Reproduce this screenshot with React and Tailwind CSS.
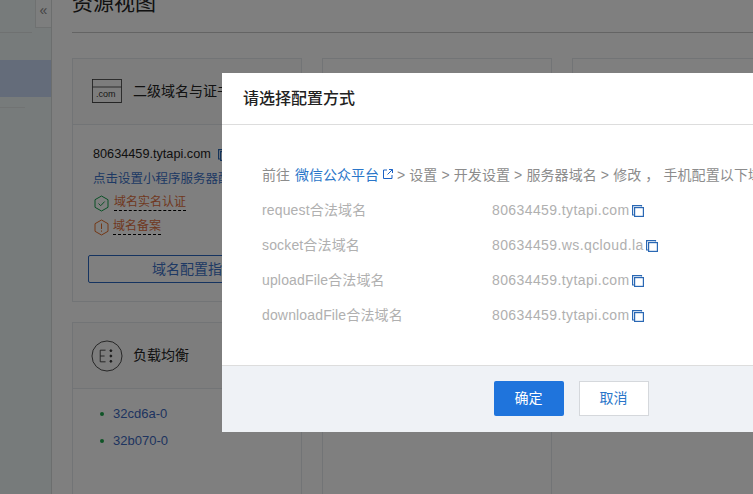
import React from 'react';

const font = { cjk: 'font-["Liberation_Sans","Noto_Sans_CJK_SC",sans-serif]' };

function CopyIcon({ className = '' }) {
  return (
    <svg className={className} width="12" height="12" viewBox="0 0 12 12" fill="none" stroke="#2a68b4" strokeWidth="1.2">
      <path d="M9.5 1.5V.6H.6v9.4h1.4" />
      <rect x="2.6" y="2.6" width="8.8" height="8.8" />
    </svg>
  );
}

function Card({ icon, title, className = '', children }) {
  return (
    <div className={`border border-[#e5e8ec] bg-white ${className}`}>
      <div className="h-[66px] border-b border-[#e5e8ec] flex items-center gap-[10px] pl-[19px] bg-[#fbfbfb]">
        {icon}
        <span className="text-[14px] text-[#222] whitespace-nowrap">{title}</span>
      </div>
      {children}
    </div>
  );
}

const rows = [
  ['request合法域名', '80634459.tytapi.com'],
  ['socket合法域名', '80634459.ws.qcloud.la'],
  ['uploadFile合法域名', '80634459.tytapi.com'],
  ['downloadFile合法域名', '80634459.tytapi.com'],
];

export default function App() {
  return (
    <div className={`relative flex h-screen w-full overflow-hidden bg-white ${font.cjk}`}>
      {/* sidebar */}
      <div className="w-[52px] shrink-0 bg-[#eef6f6] border-r border-[#d8dcdc] flex flex-col">
        <div className="h-[28px] flex justify-end">
          <div className="w-[16px] bg-[#fbfdfd] border-l border-b border-[#dfe3e3] flex items-start justify-center text-[14px] leading-[20px] text-[#888]">«</div>
        </div>
        <div className="mt-[4px] h-px w-[32px] bg-[#dfe3e3]"></div>
        <div className="mt-[27px] h-[37px] bg-[#c9d9f4]"></div>
        <div className="mt-[10px] h-px w-[25px] bg-[#e2e6e6]"></div>
      </div>

      {/* main */}
      <div className="flex-1 pl-[20px] min-w-0">
        <div className="h-[33px] flex border-b border-[#c8c8c8]">
          <div className="-mt-[10px] text-[21px] leading-[26px] text-[#222] whitespace-nowrap">资源视图</div>
        </div>
        <div className="mt-[25px] flex gap-[20px]">
          <div className="w-[230px] shrink-0 flex flex-col gap-[20px]">
            <Card
              className="h-[244px]"
              title="二级域名与证书"
              icon={
                <svg width="31" height="25" viewBox="0 0 31 25" fill="none" stroke="#333" strokeWidth="0.8" className="shrink-0">
                  <rect x="0.5" y="0.5" width="29" height="23" />
                  <path d="M.5 8h29" />
                  <path d="M.5 23.5h30" strokeDasharray="1 1" />
                  <text x="4" y="18" fontSize="9" fill="#333" stroke="none" fontFamily="Liberation Sans">.com</text>
                </svg>
              }
            >
              <div className="pt-[18px] pl-[15px] flex flex-col">
                <div className="ml-[5px] h-[24px] flex items-center gap-[7px] text-[12.7px] text-[#222] whitespace-nowrap">
                  80634459.tytapi.com
                  <CopyIcon />
                </div>
                <div className="ml-[5px] h-[24px] flex items-center text-[12.5px] text-[#3d72c8] whitespace-nowrap">点击设置小程序服务器配置</div>
                <div className="ml-[5px] h-[24px] flex items-center gap-[4px]">
                  <svg width="17" height="17" viewBox="0 0 17 17" fill="none" stroke="#12a04a" strokeWidth="1" className="shrink-0">
                    <path d="M8.5 1l6.5 3.7v7.6L8.5 16 2 12.3V4.7z" />
                    <path d="M5.5 8.5l2.2 2.2 4-4.2" />
                  </svg>
                  <span className="text-[12px] leading-[15px] text-[#e0703f] border-b border-dashed border-black">域名实名认证</span>
                </div>
                <div className="ml-[5px] h-[24px] flex items-center gap-[3px]">
                  <svg width="17" height="17" viewBox="0 0 17 17" fill="none" stroke="#e8702a" strokeWidth="1" className="shrink-0">
                    <path d="M8.5 1l6.5 3.7v7.6L8.5 16 2 12.3V4.7z" />
                    <path d="M8.5 4.5v5.5M8.5 11.5v1.2" />
                  </svg>
                  <span className="text-[12px] leading-[15px] text-[#e0703f] border-b border-dashed border-black">域名备案</span>
                </div>
                <div className="mt-[16px] h-[28px] w-[212px] border border-[#2a66c0] rounded-[2px] flex items-center justify-center text-[14px] text-[#3d72c8]">域名配置指引</div>
              </div>
            </Card>
            <Card
              className="h-[300px]"
              title="负载均衡"
              icon={
                <svg width="32" height="32" viewBox="0 0 33 33" fill="none" stroke="#333" strokeWidth="0.9" className="shrink-0 -ml-px">
                  <circle cx="16.5" cy="16.5" r="15.5" />
                  <path d="M15 10.5h-5.5v12H15M9.5 16.5H14" />
                  <circle cx="20.5" cy="11" r="1" fill="#333" />
                  <circle cx="20.5" cy="16.5" r="1" fill="#333" />
                  <circle cx="20.5" cy="22" r="1" fill="#333" />
                </svg>
              }
            >
              <div className="pt-[11px] pl-[27px] flex flex-col">
                {['32cd6a-0', '32b070-0'].map((name) => (
                  <div key={name} className="h-[27px] flex items-center gap-[9px] text-[13px] text-[#3d68c0]">
                    <span className="w-[4px] h-[4px] bg-[#1fa84f] rounded-full"></span>
                    {name}
                  </div>
                ))}
              </div>
            </Card>
          </div>
          <div className="w-[230px] shrink-0 flex flex-col gap-[20px]">
            <div className="h-[244px] border border-[#e5e8ec]"></div>
            <div className="h-[300px] border border-[#e5e8ec]"></div>
          </div>
          <div className="w-[230px] shrink-0">
            <div className="h-[244px] border border-[#e5e8ec]"></div>
          </div>
        </div>
      </div>

      {/* mask */}
      <div className="absolute inset-0 bg-black/50"></div>

      {/* dialog */}
      <div className="absolute left-[222px] top-[73px] w-[698px] bg-white">
        <div className="h-[52px] border-b border-[#dddddd] flex items-center pl-[21px] text-[16px] font-medium text-[#222]">请选择配置方式</div>
        <div className="h-[240px] pl-[40px] pt-[40px]">
          <div className="h-[20px] flex items-center text-[14px] text-[#8c8c8c] whitespace-nowrap">
            前往<span className="ml-[5px] text-[#2a76c9]">微信公众平台</span>
            <svg width="10" height="10" viewBox="0 0 10 10" fill="none" stroke="#1c62c4" strokeWidth="1" className="ml-[4px] mb-[3px]">
              <path d="M4 1H.5v8.5H9V6" />
              <path d="M6 .5h3.5V4M9.5.5L4.5 5.5" />
            </svg>
            <span className="ml-[4px] tracking-[0.1px]">&gt; 设置 &gt; 开发设置 &gt; 服务器域名 &gt; 修改 ， 手机配置以下域名</span>
          </div>
          <div className="mt-[8px] flex flex-col">
            {rows.map(([label, value]) => (
              <div key={label} className="h-[35px] flex items-center text-[14px] text-[#b0b0b0] whitespace-nowrap">
                <span className="w-[230px] tracking-[0.15px]">{label}</span>
                <span className="tracking-[0.4px]">{value}</span>
                <CopyIcon className="ml-[2px] mt-[1px]" />
              </div>
            ))}
          </div>
        </div>
        <div className="h-[67px] border-t border-[#dddddd] bg-[#eff2f6] flex items-start pt-[15px] justify-center gap-[15px]">
          <button className="w-[70px] h-[35px] bg-[#1f74dc] rounded-[2px] text-[14px] text-white">确定</button>
          <button className="w-[70px] h-[35px] bg-white border border-[#d5d8dc] text-[14px] text-[#2a76c9]">取消</button>
        </div>
      </div>
    </div>
  );
}
